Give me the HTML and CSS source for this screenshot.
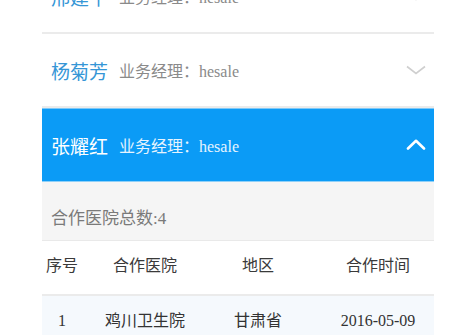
FILE: index.html
```html
<!DOCTYPE html>
<html lang="zh">
<head>
<meta charset="utf-8">
<link rel="stylesheet" href="styles.css">
</head>
<body>
<div class="page">
  <div class="item">
    <span class="name">邢建平</span><span class="role">业务经理：hesale</span>
    <svg class="chev" width="20" height="10" viewBox="0 0 20 10"><path d="M1 1.5 L10 8.5 L19 1.5" fill="none" stroke="#cfcfcf" stroke-width="1.6"/></svg>
  </div>
  <div class="item">
    <span class="name">杨菊芳</span><span class="role">业务经理：hesale</span>
    <svg class="chev" width="20" height="10" viewBox="0 0 20 10"><path d="M1 1.5 L10 8.5 L19 1.5" fill="none" stroke="#cfcfcf" stroke-width="1.6"/></svg>
  </div>
  <div class="item active">
    <span class="name">张耀红</span><span class="role">业务经理：hesale</span>
    <svg class="chev up" width="20" height="12" viewBox="0 0 20 12"><path d="M2 9.5 L10 1.8 L18 9.5" fill="none" stroke="#ffffff" stroke-width="2.6" stroke-linecap="round" stroke-linejoin="round"/></svg>
  </div>
  <div class="total">合作医院总数:4</div>
  <div class="trow head">
    <span>序号</span><span>合作医院</span><span>地区</span><span class="last">合作时间</span>
  </div>
  <div class="trow body">
    <span>1</span><span>鸡川卫生院</span><span>甘肃省</span><span class="last">2016-05-09</span>
  </div>
</div>
</body>
</html>
```
FILE: styles.css
```css
html, body {
  margin: 0;
  padding: 0;
  background: #ffffff;
}
body {
  font-family: "Liberation Serif", "Noto Sans CJK SC", serif;
  overflow: hidden;
}
.page {
  width: 392px;
  margin-left: 42px;
  margin-top: -40px;
}
.item {
  height: 72px;
  display: flex;
  align-items: center;
  padding-left: 9px;
  padding-right: 8px;
  border-bottom: 2px solid #ebebeb;
  background: #fff;
}
.name {
  font-size: 19px;
  color: #3596d6;
  margin-right: 11px;
}
.role {
  font-size: 16px;
  color: #8a8a8a;
  flex: 1;
}
.chev {
  display: block;
}
.item.active {
  background: #0b9bf6;
  border-top: 1px solid #7cc8f7;
  border-bottom: 1px solid #8fd0f8;
  height: 72px;
}
.item.active .name { color: #ffffff; }
.item.active .role { color: #e6f4fe; }
.total {
  height: 59px;
  box-sizing: border-box;
  padding: 26px 0 0 9px;
  font-size: 17px;
  line-height: 22px;
  color: #7a7a7a;
  background: #f5f5f5;
  border-bottom: 1px solid #e9e9e9;
}
.trow {
  display: grid;
  grid-template-columns: 40px 126px 100px 1fr;
  align-items: center;
  height: 53px;
  font-size: 16px;
  line-height: 20px;
  color: #333333;
  text-align: center;
}
.trow > span {
  padding-bottom: 3px;
}
.trow.head {
  background: #ffffff;
  border-bottom: 2px solid #ebebeb;
  color: #3a3a3a;
}
.trow.body {
  background: #f5f9fd;
}
.trow .last {
  padding-left: 14px;
}
```
